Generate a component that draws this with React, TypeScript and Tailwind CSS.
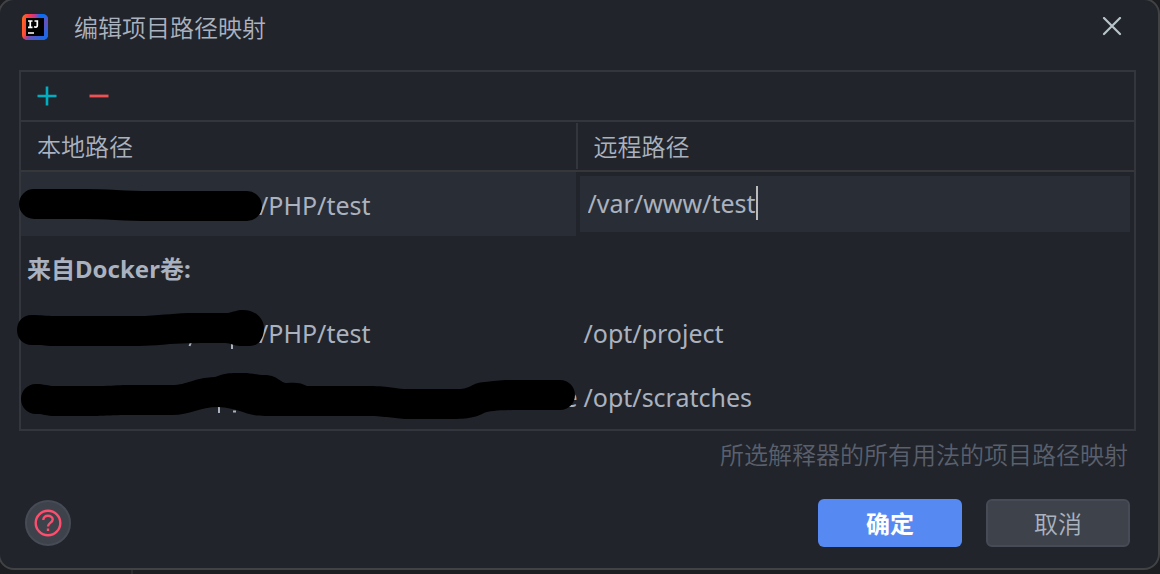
import { useState } from 'react';

const redactions = {
  selected: 'M34 204 H85 C112 204 120 206 150 206 H247',
  project:
    'M32 315 C42 315 45 316 55 316 H145 C165 315 175 313 195 313 H228 C234 312 236 310 243 310 C256 310 264 319 264 328 C264 338 259 346 250 346 H240 C234 346 231 343 225 343 C200 343 185 343 170 344 C150 346 140 346 120 346 H50 C42 345 40 345 32 345 C22 345 17 338 17 330 C17 322 22 315 32 315 Z',
  scratches:
    'M36 384 C44 384 48 386 55 386 H100 C110 386 120 385 125 385 H172 C188 385 192 378 215 377 C226 372 235 373 243 373 C252 373 256 375 266 375 C279 376 280 383 287 383 C296 382 302 383 307 386 H370 C390 386 396 389 405 389 H458 C472 389 470 383 485 382 C500 380 505 380 515 380 H560 C569 380 575 387 575 395 C575 403 569 410 560 410 H520 C500 410 490 411 484 413 C476 417 470 419 450 419 H405 C390 418 385 416 365 416 H265 C245 416 240 408 218 407 C200 407 190 415 172 415 H130 C110 415 105 416 90 416 H52 C44 415 42 414 36 414 C27 414 21 407 21 399 C21 391 27 384 36 384 Z',
};

function AppLogo() {
  return (
    <svg width="26" height="26" viewBox="0 0 26 26" aria-hidden="true">
      <defs>
        <linearGradient id="edge" x1="0" y1="0.3" x2="1" y2="0.45">
          <stop offset="0" stopColor="#ff681f" />
          <stop offset="0.22" stopColor="#fb3c4b" />
          <stop offset="0.45" stopColor="#c3388f" />
          <stop offset="0.65" stopColor="#0b6cf5" />
          <stop offset="1" stopColor="#0872f2" />
        </linearGradient>
        <linearGradient id="base" x1="0" y1="0" x2="1" y2="1">
          <stop offset="0.45" stopColor="#7b4bb0" stopOpacity="0" />
          <stop offset="0.6" stopColor="#6650b8" />
          <stop offset="0.85" stopColor="#1f68e4" />
        </linearGradient>
      </defs>
      <rect width="26" height="26" rx="5" fill="url(#edge)" />
      <rect width="26" height="26" rx="5" fill="url(#base)" />
      <rect x="4" y="4" width="18" height="18" fill="#000" />
      <path
        d="M6 7H10.500M8.250 7V13.300M6 13.300H10.500M12.500 7H16.200M15.300 7V11.500C15.300 13 14 13.600 12 12.800M6 19H12"
        fill="none"
        stroke="#fff"
        strokeWidth="1.7"
      />
    </svg>
  );
}

export default function App() {
  const [remote, setRemote] = useState('/var/www/test');

  return (
    <div className="min-h-screen overflow-hidden bg-[#1c1d20] font-['Noto_Sans','Noto_Sans_CJK_SC',sans-serif] text-2xl leading-8 text-[#abb2bf]">
      <main
        role="dialog"
        aria-labelledby="dialog-title"
        className="-mt-0.5 -ml-0.5 rounded-2xl border-2 border-[#414244] bg-[#21242b] pb-[21px]"
      >
        <header className="flex h-[54px] items-center pr-9 pl-[22px]">
          <AppLogo />
          <h1 id="dialog-title" className="ml-[26px] grow font-['Noto_Sans_CJK_SC',sans-serif] font-[350]">
            编辑项目路径映射
          </h1>
          <button type="button" aria-label="关闭" className="flex size-5 items-center justify-center">
            <svg width="20" height="20" viewBox="0 0 20 20" fill="none" stroke="#b7c5ca" strokeWidth="2.2" strokeLinecap="round">
              <path d="M2 1L18 17M18 1L2 17" />
            </svg>
          </button>
        </header>

        <section className="mt-4 mr-[22px] ml-[19px] border-2 border-[#33363d] pb-px">
          <div className="flex h-12 items-center gap-8 px-4">
            <button type="button" aria-label="添加" className="size-5">
              <svg width="20" height="20" viewBox="0 0 20 20" stroke="#00adc1" strokeWidth="2.6">
                <path d="M0.5 10H19.5M10 0.5V19.5" />
              </svg>
            </button>
            <button type="button" aria-label="移除" className="size-5">
              <svg width="20" height="20" viewBox="0 0 20 20" stroke="#ee5153" strokeWidth="2.8">
                <path d="M0.5 10H19.5" />
              </svg>
            </button>
          </div>

          <table className="w-full table-fixed border-separate border-spacing-0 text-left text-[25px]">
            <thead className="font-['Noto_Sans_CJK_SC',sans-serif] text-2xl">
              <tr className="h-[52px]">
                <th className="w-[calc(50%+1px)] border-y-2 border-t-[#33363d] border-b-[#35373a] p-0 font-[350]">
                  <div className="flex h-[46px] items-center border-r-2 border-[#33363d] pl-4">本地路径</div>
                </th>
                <th className="border-y-2 border-t-[#33363d] border-b-[#35373a] p-0 pl-4 font-[350]">远程路径</th>
              </tr>
            </thead>
            <tbody>
              <tr className="h-16">
                <td className="p-0">
                  <div className="relative mr-0.5 flex h-16 items-center bg-[#292d35] pt-0.5 pl-[238px]">
                    /PHP/test
                    <svg className="absolute top-0 left-0 overflow-visible" width="556" height="64" viewBox="21 172 556 64" aria-hidden="true">
                      <path d={redactions.selected} fill="none" stroke="#000" strokeWidth="30" strokeLinecap="round" />
                    </svg>
                  </div>
                </td>
                <td className="px-1 py-1 pl-0.5">
                  <div className="flex h-14 items-center bg-[#292d35] pb-0.5 pl-2">
                    <input
                      aria-label="远程路径"
                      value={remote}
                      onChange={(e) => setRemote(e.target.value)}
                      className="field-sizing-content bg-transparent outline-none"
                    />
                    <span className="h-[34px] w-0.5 bg-[#bbbbbb]" />
                  </div>
                </td>
              </tr>
              <tr className="h-16">
                <th colSpan={2} className="p-0 pt-0.5 pl-1.5 text-2xl font-bold">来自Docker卷:</th>
              </tr>
              <tr className="h-16">
                <td className="p-0">
                  <div className="relative flex h-16 items-center pt-0.5 pl-[238px]">
                    /PHP/test
                    <svg className="absolute top-0 left-0 overflow-visible" width="556" height="64" viewBox="21 300 556 64" aria-hidden="true">
                      <path d="M189.500 346L191.500 341M232 340V349M236 344H240" fill="none" stroke="#abb2bf" strokeWidth="2" />
                      <path d={redactions.project} />
                    </svg>
                  </div>
                </td>
                <td className="p-0 pt-0.5 pl-1.5">/opt/project</td>
              </tr>
              <tr className="h-16">
                <td className="p-0">
                  <div className="relative flex h-16 items-center justify-end pt-0.5">
                    e
                    <svg className="absolute top-0 left-0 overflow-visible" width="556" height="64" viewBox="21 364 556 64" aria-hidden="true">
                      <path d="M219 405V413M233 411.500H236" fill="none" stroke="#abb2bf" strokeWidth="2" />
                      <path d={redactions.scratches} />
                    </svg>
                  </div>
                </td>
                <td className="p-0 pt-0.5 pl-1.5">/opt/scratches</td>
              </tr>
            </tbody>
          </table>
        </section>

        <p className="mt-[7px] mr-[30px] text-right font-['Noto_Sans_CJK_SC',sans-serif] font-[350] text-[#5a606d]">
          所选解释器的所有用法的项目路径映射
        </p>

        <footer className="mt-[29px] mr-7 ml-[25px] flex items-center gap-6">
          <button
            type="button"
            aria-label="帮助"
            className="mr-auto flex size-[46px] items-center justify-center rounded-full border-2 border-[#464b55] bg-[#3d424b]"
          >
            <svg width="28" height="28" viewBox="0 0 28 28" fill="none" stroke="#ff4d6d" strokeWidth="2.4">
              <circle cx="14" cy="14" r="12.300" />
              <path d="M9.300 11C9.300 8.300 11.200 6.800 14 6.800C16.800 6.800 18.700 8.400 18.700 10.600C18.700 13.600 14 13.800 14 17.600M14 19.600V22" />
            </svg>
          </button>
          <button type="button" className="h-12 w-36 rounded-md bg-[#568af2] font-['Noto_Sans_CJK_SC',sans-serif] font-bold text-white">
            确定
          </button>
          <button type="button" className="h-12 w-36 rounded-md border-2 border-[#464b55] bg-[#3d424b] font-['Noto_Sans_CJK_SC',sans-serif] font-[350]">
            取消
          </button>
        </footer>
      </main>
      <div className="ml-[131px] h-1 w-0.5 bg-[#292b2e]" />
    </div>
  );
}
